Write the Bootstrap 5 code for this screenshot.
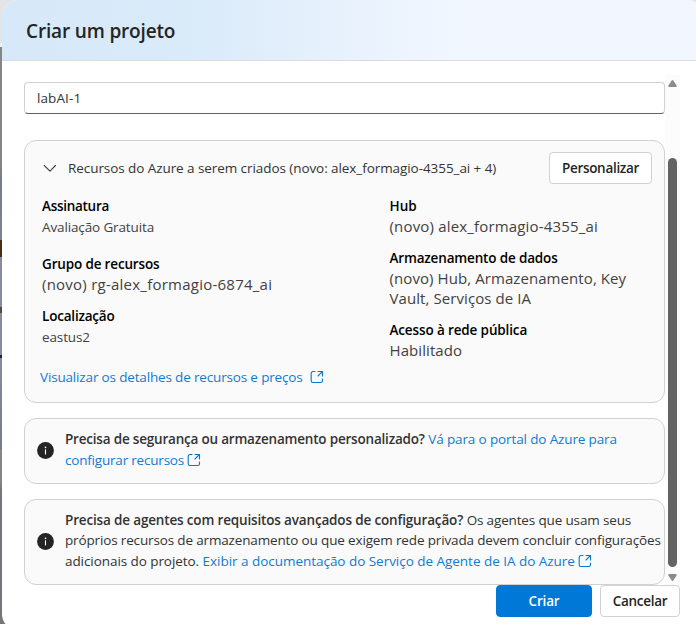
<!DOCTYPE html>
<html lang="pt-BR">
<head>
<meta charset="utf-8">
<meta name="viewport" content="width=device-width, initial-scale=1">
<title>Criar um projeto</title>
<link rel="stylesheet" href="https://cdn.jsdelivr.net/npm/bootstrap@5.3.0/dist/css/bootstrap.min.css">
<style>
  body { height: 624px; font: 13.5px/20px "Open Sans", "Noto Sans", sans-serif; color: #333; background: linear-gradient(#e4e4e4 0 43px, #f2f2f2 43px 47px, #858585 47px 160px, #777c8b 180px, #7c8194 240px, #4b2b12 240px 257px, #858ca0 257px 307px, #5a4a42 307px 313px, #858ca0 313px 355px, #1e2340 355px 358px, #858ca0 358px, #777b88 449px, #858585 450px 482px, #77757c 490px 600px, #777 624px); }
  .dialog-box { width: 701px; height: 630px; margin-left: 2px; background: #fff; border-radius: 16px; }
  .dialog-head { height: 61px; padding: 2px 24px 0; border-bottom: 1px solid #dcdcde; background: linear-gradient(90deg, #d7e9f8 0, #d9eaf9 26%, #f2f7ff 66%); }
  .dialog-head h1 { font-size: 19px; font-weight: 600; letter-spacing: -.16px; line-height: 28px; color: #242424; }
  .scroll-area { padding: 14px 18px 0 22px; height: 524px; }
  .content-col { width: 641px; padding-top: 7px; }
  .name-field.form-control { height: 32px; padding: 0 12px 1px; border: 1px solid #d1d1d1; border-bottom-color: #616161; border-radius: 4px; font-size: 13.5px; letter-spacing: .1px; color: #333; }
  .panel { border: 1px solid #d1d1d1; border-radius: 12px; background: #fafafa; }
  .resources { height: 263px; margin-top: 26px; padding: 11px 12px 0 17px; }
  .btn.plain, .btn.main { height: 32px; padding: 0; border-radius: 4px; font-size: 13.5px; font-weight: 600; line-height: 20px; letter-spacing: -.3px; }
  .btn.plain { background: #fff; border: 1px solid #d1d1d1; color: #242424; }
  .btn.main { background: #0078d7; border-color: #0078d7; color: #fff; width: 96px; letter-spacing: -.16px; }
  .w-custom { width: 103px; }
  .w-cancel { width: 80px; }
  .foot { padding-right: 23px; }
  .details { margin-top: 12px; }
  .details dl { margin: 0; }
  .details .left-col { width: 347.5px; }
  .details dt { font-weight: 600; color: #000; margin-bottom: 1px; }
  .details dd { margin-bottom: 11px; color: #424242; }
  .details dd.big { font-size: 15px; margin-top: -1px; margin-bottom: 12px; }
  .details dd.wide-gap { margin-bottom: 17px; }
  .details dd:last-child { margin-bottom: 0; }
  .azure { color: #0f7bd5; text-decoration: none; }
  .price-link { margin: 7px 0 0 -2px; }
  .ext { width: 14px; height: 14px; fill: none; stroke: #0078d4; stroke-width: 1.1; stroke-linecap: round; stroke-linejoin: round; }
  .ext-out { margin-left: 7px; }
  .ext-inline { vertical-align: -2px; margin-left: 3px; }
  .note { margin-top: 15px; padding-left: 12px; line-height: 20.5px; white-space: nowrap; }
  .note strong { font-weight: 600; }
  .note-a { height: 66px; }
  .note-b { height: 86px; }
  .note-icon { width: 17px; height: 17px; margin: -2px 11px 0 0; }
  .note-a .note-text { margin-top: -3px; }
  .note-b .note-text { margin-top: -3px; }
  .track { width: 15px; height: 511px; background: #fcfcfc; }
  .track .thumb { width: 9px; height: 409px; border-radius: 5px; background: #636363; margin: 71px 0 7px; }
  .s-a { letter-spacing: -.07px; } .s-b { letter-spacing: -.13px; } .s-c { letter-spacing: -.16px; }
  .s-d { letter-spacing: -.2px; } .s-e { letter-spacing: -.28px; } .s-f { letter-spacing: .08px; }
  .s-g { letter-spacing: .17px; } .s-h { letter-spacing: .24px; } .s-i { letter-spacing: -.03px; }
  .s-j { letter-spacing: -.13px; } .s-k { letter-spacing: -.15px; }
</style>
<script src="https://cdn.jsdelivr.net/npm/bootstrap@5.3.0/dist/js/bootstrap.bundle.min.js"></script>
</head>
<body class="overflow-hidden">
<main class="dialog-box overflow-hidden">
  <header class="dialog-head d-flex align-items-center"><h1 class="m-0">Criar um projeto</h1></header>
  <div class="scroll-area d-flex">
    <div class="content-col flex-shrink-0">
      <input class="form-control name-field shadow-none" type="text" value="labAI-1" aria-label="Nome do projeto">

      <section class="panel resources">
        <div class="d-flex align-items-center">
          <svg width="14" height="14" viewBox="0 0 14 14" fill="none" stroke="#424242" stroke-width="1.1" stroke-linecap="round" stroke-linejoin="round"><path d="M2.200 4.500 8 10.200l5.500-5.700"/></svg>
          <span class="s-a ms-2 ps-1 text-nowrap">Recursos do Azure a serem criados (novo: alex_formagio-4355_ai + 4)</span>
          <button class="btn plain w-custom ms-auto">Personalizar</button>
        </div>
        <div class="details d-flex">
          <dl class="left-col">
            <dt class="s-e">Assinatura</dt><dd class="wide-gap s-b">Avaliação Gratuita</dd>
            <dt class="s-c">Grupo de recursos</dt><dd class="big s-h">(novo) rg-alex_formagio-6874_ai</dd>
            <dt class="s-d">Localização</dt><dd class="s-b">eastus2</dd>
          </dl>
          <dl class="text-nowrap">
            <dt>Hub</dt><dd class="big s-g">(novo) alex_formagio-4355_ai</dd>
            <dt class="s-c">Armazenamento de dados</dt><dd class="big s-f">(novo) Hub, Armazenamento, Key<br>Vault, Serviços de IA</dd>
            <dt class="s-b">Acesso à rede pública</dt><dd class="big s-f">Habilitado</dd>
          </dl>
        </div>
        <a class="azure price-link d-flex align-items-center" href="#"><span class="s-c">Visualizar os detalhes de recursos e preços</span>
          <svg class="ext ext-out" viewBox="0 0 14 14"><path d="M5 1.500H3A1.800 1.800 0 0 0 1.200 3.300v7.400A1.800 1.800 0 0 0 3 12.500h7.700a1.800 1.800 0 0 0 1.800-1.800V9M8 1.500h4.500V6M12.300 1.700 8 6"/></svg></a>
      </section>

      <section class="panel note note-a d-flex align-items-center">
        <svg class="note-icon" viewBox="0 0 17 17"><circle cx="8.500" cy="8.500" r="8.400" fill="#242424"/><path d="M8.500 7.700v4.300" stroke="#fff" stroke-width="1.100" stroke-linecap="round"/><circle cx="8.500" cy="5.400" r=".8" fill="#fff"/></svg>
        <div class="note-text"><strong class="s-d">Precisa de segurança ou armazenamento personalizado?</strong> <a class="azure s-b" href="#">Vá para o portal do Azure para</a><br><a class="azure s-d" href="#">configurar recursos<svg class="ext ext-inline" viewBox="0 0 14 14"><path d="M5 1.500H3A1.800 1.800 0 0 0 1.200 3.300v7.400A1.800 1.800 0 0 0 3 12.500h7.700a1.800 1.800 0 0 0 1.800-1.800V9M8 1.500h4.500V6M12.300 1.700 8 6"/></svg></a></div>
      </section>

      <section class="panel note note-b d-flex align-items-center">
        <svg class="note-icon" viewBox="0 0 17 17"><circle cx="8.500" cy="8.500" r="8.400" fill="#242424"/><path d="M8.500 7.700v4.300" stroke="#fff" stroke-width="1.100" stroke-linecap="round"/><circle cx="8.500" cy="5.400" r=".8" fill="#fff"/></svg>
        <div class="note-text"><strong class="s-c">Precisa de agentes com requisitos avançados de configuração?</strong> <span class="s-k">Os agentes que usam seus</span><br><span class="s-k">próprios recursos de armazenamento ou que exigem rede privada devem concluir configurações</span><br><span class="s-a">adicionais do projeto.</span> <a class="azure s-i" href="#">Exibir a documentação do Serviço de Agente de IA do Azure<svg class="ext ext-inline" viewBox="0 0 14 14"><path d="M5 1.500H3A1.800 1.800 0 0 0 1.200 3.300v7.400A1.800 1.800 0 0 0 3 12.500h7.700a1.800 1.800 0 0 0 1.800-1.800V9M8 1.500h4.500V6M12.300 1.700 8 6"/></svg></a></div>
      </section>
    </div>
    <div class="track d-flex flex-column align-items-center flex-shrink-0">
      <svg class="mt-1 flex-shrink-0" width="9" height="8" viewBox="0 0 9 8"><path d="M3.700 1.400 0.400 6.500Q0 8 1.200 8h6.600Q9 8 8.600 6.500L5.300 1.400Q4.500.4 3.700 1.400z" fill="#8b8b8b"/></svg>
      <div class="thumb flex-shrink-0"></div>
      <svg class="flex-shrink-0" width="9" height="8" viewBox="0 0 9 8"><path d="M3.700 6.600.4 1.500Q0 0 1.200 0h6.600Q9 0 8.600 1.500L5.300 6.600Q4.500 7.600 3.700 6.600z" fill="#8b8b8b"/></svg>
    </div>
  </div>
  <footer class="foot d-flex justify-content-end gap-2">
    <button class="btn main">Criar</button><button class="btn plain w-cancel">Cancelar</button>
  </footer>
</main>
</body>
</html>
